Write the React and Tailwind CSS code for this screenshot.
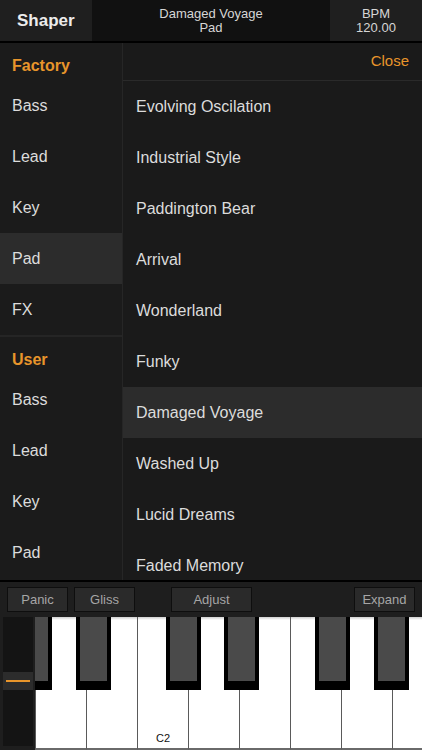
import React from "react";

const factory = ["Bass", "Lead", "Key", "Pad", "FX"];
const user = ["Bass", "Lead", "Key", "Pad"];
const presets = [
    "Evolving Oscilation",
    "Industrial Style",
    "Paddington Bear",
    "Arrival",
    "Wonderland",
    "Funky",
    "Damaged Voyage",
    "Washed Up",
    "Lucid Dreams",
    "Faded Memory",
];

// left offsets inside the white-key strip (which starts at x=35)
const blackKeys = [-18, 41, 131, 189, 280, 339];

function CategoryRow({ label, active }) {
    return (
        <div
            className={
                "h-[51px] flex items-center pl-[12px] text-[16px] text-[#dcdcdc] " +
                (active ? "bg-[#2c2c2c]" : "")
            }
        >
            {label}
        </div>
    );
}

function Button({ label, className }) {
    return (
        <div
            className={
                "h-[25px] flex items-center justify-center bg-[#2a2a2a] border border-[#0e0e0e] text-[13px] text-[#a6a6a6] " +
                className
            }
        >
            {label}
        </div>
    );
}

export default function App() {
    return (
        <div
            className="w-[422px] h-[750px] flex flex-col overflow-hidden bg-[#1b1b1b]"
            style={{ fontFamily: '"Liberation Sans", Arial, sans-serif' }}
        >
            {/* header */}
            <div className="h-[43px] flex border-b-2 border-black shrink-0">
                <div className="w-[92px] bg-[#1f1f1f] flex items-center pl-[17px] text-[17px] font-bold text-[#ececec]">
                    Shaper
                </div>
                <div className="flex-1 bg-[#111111] flex flex-col items-center justify-center text-[13px] leading-[14px] text-[#d6d6d6]">
                    <div>Damaged Voyage</div>
                    <div>Pad</div>
                </div>
                <div className="w-[92px] bg-[#1f1f1f] flex flex-col items-center justify-center text-[13px] leading-[14px] text-[#d6d6d6]">
                    <div>BPM</div>
                    <div>120.00</div>
                </div>
            </div>

            {/* browser */}
            <div className="h-[537px] flex shrink-0">
                <div className="w-[123px] border-r border-[#262626] bg-[#1b1b1b] flex flex-col">
                    <div className="h-[37px] pt-[13px] pl-[12px] text-[16px] leading-[19px] font-bold text-[#e8952b]">
                        Factory
                    </div>
                    {factory.map((c) => (
                        <CategoryRow key={"f" + c} label={c} active={c === "Pad"} />
                    ))}
                    <div className="h-[39px] border-t-2 border-[#252525] pt-[13px] pl-[12px] text-[16px] leading-[19px] font-bold text-[#e8952b]">
                        User
                    </div>
                    {user.map((c) => (
                        <CategoryRow key={"u" + c} label={c} />
                    ))}
                </div>
                <div className="flex-1 bg-[#1a1a1a] flex flex-col overflow-hidden">
                    <div className="h-[38px] shrink-0 border-b border-[#2a2a2a] flex items-center justify-end pr-[13px] text-[15px] text-[#e8952b]">
                        Close
                    </div>
                    {presets.map((p) => (
                        <div
                            key={p}
                            className={
                                "h-[51px] shrink-0 flex items-center pl-[13px] text-[16px] text-[#dcdcdc] " +
                                (p === "Damaged Voyage" ? "bg-[#2c2c2c]" : "")
                            }
                        >
                            {p}
                        </div>
                    ))}
                </div>
            </div>

            {/* bottom controls */}
            <div className="flex-1 border-t-2 border-black bg-[#1e1e1e] flex flex-col">
                <div className="h-[35px] flex items-start pt-[5px] px-[7px] shrink-0">
                    <Button label="Panic" className="w-[61px]" />
                    <Button label="Gliss" className="w-[61px] ml-[6px]" />
                    <Button label="Adjust" className="w-[81px] ml-[36px]" />
                    <div className="flex-1" />
                    <Button label="Expand" className="w-[61px]" />
                </div>
                <div className="flex-1 flex">
                    <div className="w-[35px] shrink-0 pl-[3px] pr-[2px] pb-[4px]">
                        <div className="h-full bg-[#141414] flex flex-col pt-[55px]">
                            <div className="h-[18px] bg-[#2c2c2c] flex items-center px-[3px]">
                                <div className="h-[2px] w-full bg-[#e8952b]" />
                            </div>
                        </div>
                    </div>
                    <div className="relative flex-1 flex overflow-hidden">
                        {Array.from({ length: 8 }).map((_, i) => (
                            <div
                                key={i}
                                className="w-[51px] shrink-0 border-l border-[#5a5a5a] border-b-2 border-b-[#6a6a6a] bg-gradient-to-b from-[#cfcfcf] via-white to-white relative"
                                style={{ backgroundSize: "100% 6px", backgroundRepeat: "no-repeat", backgroundColor: "#ffffff" }}
                            >
                                {i === 2 && (
                                    <div className="absolute bottom-[2px] left-0 right-0 text-center text-[11px] text-[#111]">
                                        C2
                                    </div>
                                )}
                            </div>
                        ))}
                        {blackKeys.map((left) => (
                            <div
                                key={left}
                                className="absolute top-0 w-[35px] h-[73px] bg-black px-[4px] pb-[9px]"
                                style={{ left }}
                            >
                                <div className="h-full bg-[#4a4a4a]" />
                            </div>
                        ))}
                    </div>
                </div>
            </div>
        </div>
    );
}
